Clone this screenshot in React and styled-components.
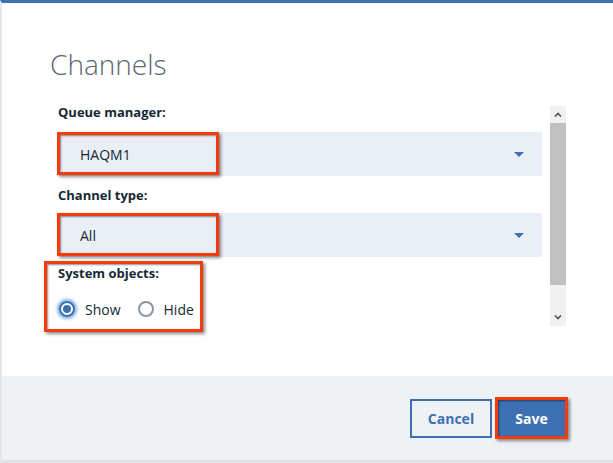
import React from "react";
import styled, { createGlobalStyle } from "styled-components";

const GlobalStyle = createGlobalStyle`
  html, body {
    margin: 0;
    padding: 0;
    background: #e6e9ec;
    font-family: "Open Sans", "Liberation Sans", sans-serif;
  }
  * { box-sizing: border-box; }
`;

// red markers drawn over the screenshot parts
const Annotation = styled.div`
  position: absolute;
  left: ${(p) => p.left}px;
  top: ${(p) => p.top}px;
  width: ${(p) => p.w}px;
  height: ${(p) => p.h}px;
  border: 3px solid #f53b0c;
  box-shadow: 2px 2px 3px rgba(0, 0, 0, 0.45),
    inset 1px 1px 2px rgba(0, 0, 0, 0.45);
  pointer-events: none;
`;

const Modal = styled.div`
  width: 613px;
  height: 463px;
  display: flex;
  flex-direction: column;
  border-top: 3px solid #3d70b2;
  border-left: 2px solid #e4e7ea;
  background: #fff;
  overflow: hidden;
`;

const Body = styled.div`
  flex: 1;
  padding: 0 47px 0 48px;
`;

const Title = styled.h2`
  margin: 45px 0 0 0;
  font-family: "Open Sans", sans-serif;
  font-weight: 300;
  font-size: 28px;
  line-height: 32px;
  color: #5a6872;
`;

const ScrollArea = styled.div`
  display: flex;
  margin-top: 23px;
  height: 224px;
`;

const Content = styled.div`
  flex: 1;
  padding: 0 8px 0 8px;
`;

const Field = styled.div`
  position: relative;
  margin-top: ${(p) => p.mt || 0}px;
`;

const Label = styled.div`
  font-size: 13px;
  font-weight: 700;
  line-height: 18px;
  color: #152935;
  margin-bottom: ${(p) => p.mb || 10}px;
`;

const Select = styled.div`
  position: relative;
  height: 44px;
  display: flex;
  align-items: center;
  justify-content: space-between;
  padding: 0 18px 0 22px;
  background: #eaeef5;
  font-size: 14px;
  color: #152935;
`;

const Caret = styled.span`
  width: 0;
  height: 0;
  border-left: 5px solid transparent;
  border-right: 5px solid transparent;
  border-top: 5px solid #3d70b2;
`;

const RadioRow = styled.div`
  display: flex;
  align-items: center;
  gap: 17px;
  margin-top: 17px;
  height: 20px;
`;

const RadioItem = styled.label`
  display: flex;
  align-items: center;
  gap: 10px;
  font-size: 14px;
  color: #152935;
`;

const RadioCircle = styled.span`
  position: relative;
  width: 16px;
  height: 16px;
  border-radius: 50%;
  border: 2px solid ${(p) => (p.checked ? "#3d70b2" : "#8897a2")};
  background: #fff;
  margin-left: ${(p) => p.ml || 0}px;
  box-shadow: ${(p) =>
    p.checked ? "0 0 0 2px #a9c6ee, 0 0 3px 3px #c7dcf5" : "none"};
  &::after {
    content: "";
    display: ${(p) => (p.checked ? "block" : "none")};
    position: absolute;
    left: 2px;
    top: 2px;
    width: 8px;
    height: 8px;
    border-radius: 50%;
    background: #3d70b2;
  }
`;

const Scrollbar = styled.div`
  width: 16px;
  margin-top: 3px;
  height: 220px;
  display: flex;
  flex-direction: column;
  background: #f1f1f1;
`;

const ArrowBtn = styled.div`
  height: 17px;
  display: flex;
  align-items: center;
  justify-content: center;
`;

const Thumb = styled.div`
  flex: 1;
  background: #c1c1c1;
  margin-bottom: 24px;
`;

const Footer = styled.div`
  height: 87px;
  display: flex;
  align-items: center;
  justify-content: flex-end;
  gap: 5px;
  padding-right: 47px;
  background: #eff2f5;
  border-bottom: 3px solid #dfe3e6;
`;

const Button = styled.button`
  position: relative;
  height: 39px;
  width: ${(p) => p.w}px;
  font-family: "Open Sans", sans-serif;
  font-size: 14px;
  font-weight: 700;
  border: 2px solid #3d70b2;
  background: ${(p) => (p.primary ? "#3d70b2" : "transparent")};
  color: ${(p) => (p.primary ? "#fff" : "#3d70b2")};
  cursor: pointer;
`;

const Chevron = ({ up }) => (
  <svg width="8" height="5" viewBox="0 0 8 5">
    <path
      d={up ? "M1 4.5 L4 1.5 L7 4.5" : "M1 0.5 L4 3.5 L7 0.5"}
      fill="none"
      stroke="#505050"
      strokeWidth="1.6"
    />
  </svg>
);

export default function App() {
  return (
    <>
      <GlobalStyle />
      <Modal>
        <Body>
          <Title>Channels</Title>
          <ScrollArea>
            <Content>
              <Field>
                <Label mb={11}>Queue manager:</Label>
                <Select>
                  HAQM1
                  <Caret />
                  <Annotation left={-1} top={0} w={162} h={43} />
                </Select>
              </Field>
              <Field mt={10}>
                <Label mb={9}>Channel type:</Label>
                <Select>
                  All
                  <Caret />
                  <Annotation left={-1} top={0} w={162} h={43} />
                </Select>
              </Field>
              <Field mt={7}>
                <Label mb={0}>System objects:</Label>
                <RadioRow>
                  <RadioItem>
                    <RadioCircle checked ml={1} />
                    Show
                  </RadioItem>
                  <RadioItem>
                    <RadioCircle />
                    Hide
                  </RadioItem>
                </RadioRow>
                <Annotation left={-14} top={-3} w={159} h={71} />
              </Field>
            </Content>
            <Scrollbar>
              <ArrowBtn>
                <Chevron up />
              </ArrowBtn>
              <Thumb />
              <ArrowBtn>
                <Chevron />
              </ArrowBtn>
            </Scrollbar>
          </ScrollArea>
        </Body>
        <Footer>
          <Button w={82}>Cancel</Button>
          <Button primary w={69}>
            Save
            <Annotation left={-4} top={-4} w={73} h={42} />
          </Button>
        </Footer>
      </Modal>
    </>
  );
}
